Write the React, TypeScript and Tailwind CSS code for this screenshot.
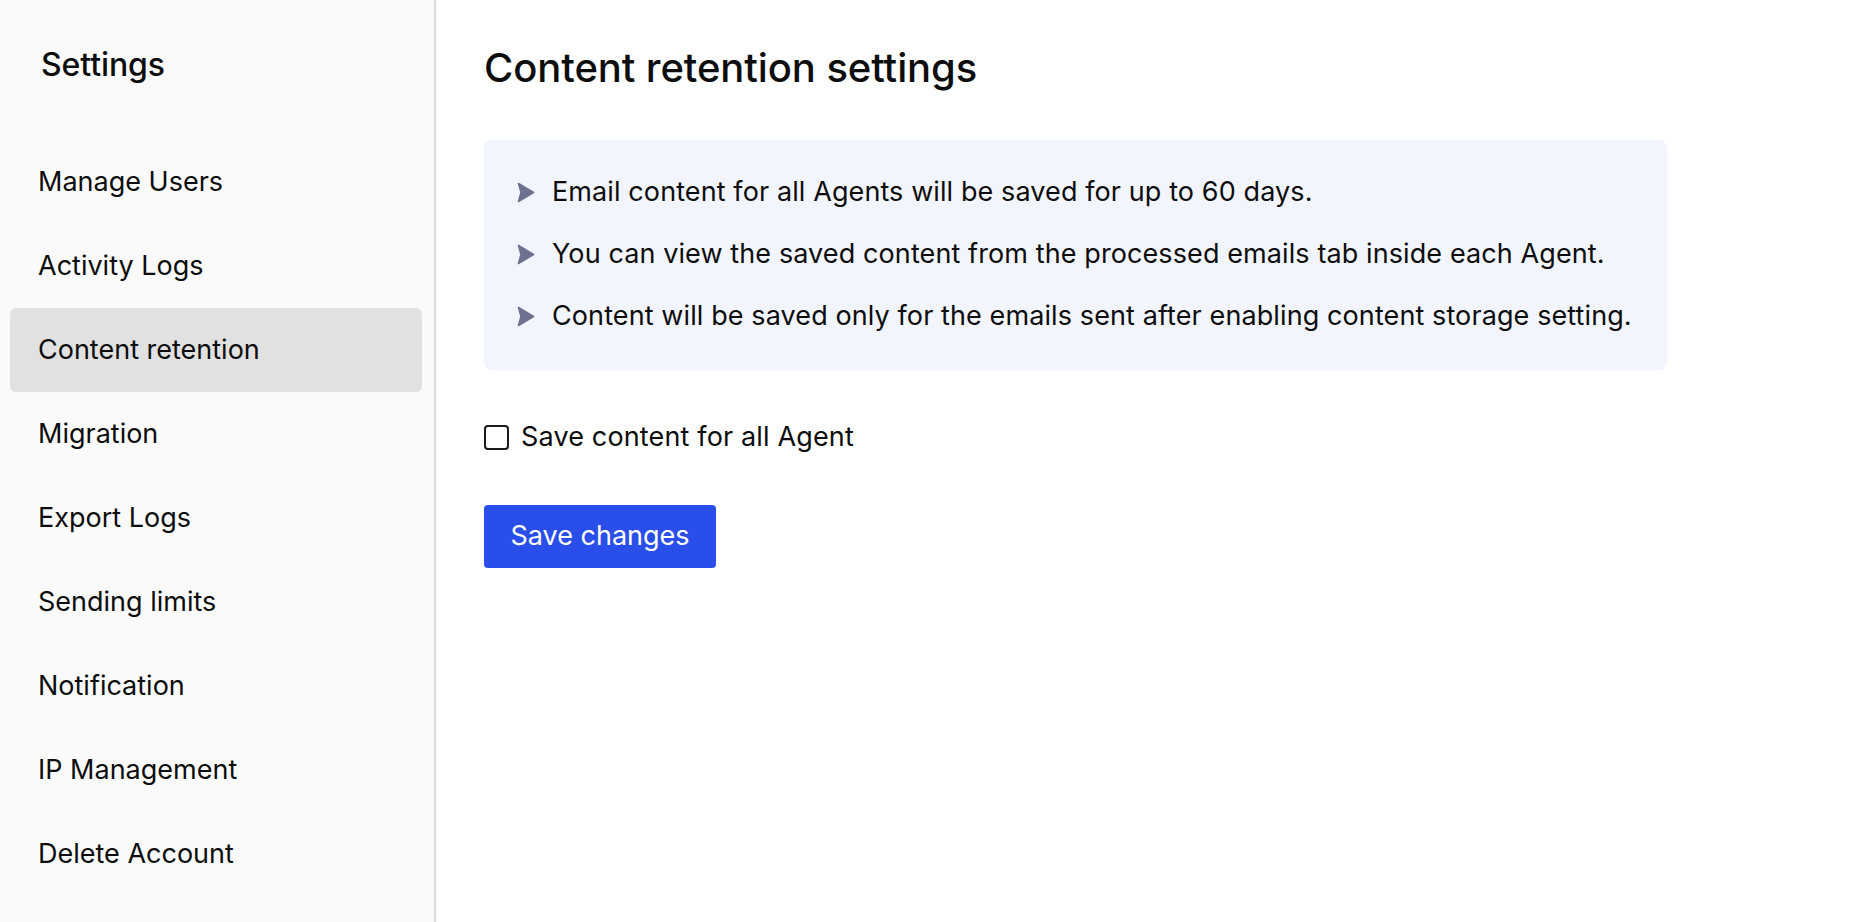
import React, { useState } from "react";

const navItems = [
  "Manage Users",
  "Activity Logs",
  "Content retention",
  "Migration",
  "Export Logs",
  "Sending limits",
  "Notification",
  "IP Management",
  "Delete Account",
];

const notes = [
  "Email content for all Agents will be saved for up to 60 days.",
  "You can view the saved content from the processed emails tab inside each Agent.",
  "Content will be saved only for the emails sent after enabling content storage setting.",
];

function Bullet() {
  return (
    <svg width="18" height="21" viewBox="0 0 18 21" className="shrink-0">
      <path
        d="M1.5 1.5 L16.5 10.5 L1.5 19.5 L4 10.5 Z"
        fill="#6d7290"
        stroke="#6d7290"
        strokeWidth="1.6"
        strokeLinejoin="round"
      />
    </svg>
  );
}

export default function App() {
  const [active, setActive] = useState("Content retention");
  const [saveAll, setSaveAll] = useState(false);

  return (
    <div
      className="flex h-screen w-full bg-white text-[#0d0d0d] antialiased"
      style={{ fontFamily: "Inter, 'Noto Sans', sans-serif" }}
    >
      <aside className="flex w-[436px] shrink-0 flex-col border-r-2 border-[#dcdcdc] bg-[#fafafa]">
        <h2 className="pl-[41px] pt-[47px] text-[32px] leading-[36px] font-medium tracking-[-0.1px]">
          Settings
        </h2>
        <nav className="mt-[57px] flex flex-col pl-[10px] pr-[12px]">
          {navItems.map((item) => (
            <button
              key={item}
              onClick={() => setActive(item)}
              className={`h-[84px] rounded-md pl-[28px] text-left text-[27px] leading-[84px] ${
                active === item ? "bg-[#e1e1e1]" : ""
              }`}
            >
              {item}
            </button>
          ))}
        </nav>
      </aside>

      <main className="flex flex-1 flex-col pl-[48px]">
        <h1 className="pt-[44px] text-[40px] leading-[48px] font-medium tracking-[-0.1px]">
          Content retention settings
        </h1>

        <div className="mt-[48px] w-[1183px] rounded-lg bg-[#f2f5fe] pb-[23px] pl-[33px] pt-[21px]">
          {notes.map((n) => (
            <div
              key={n}
              className="flex h-[62px] items-center gap-[17px] text-[27px] leading-[62px] tracking-[0.1px]"
            >
              <Bullet />
              <span>{n}</span>
            </div>
          ))}
        </div>

        <label className="mt-[51px] flex h-[32px] cursor-pointer items-center gap-[12px] text-[27px] leading-[32px] tracking-[0.15px]">
          <input
            type="checkbox"
            checked={saveAll}
            onChange={(e) => setSaveAll(e.target.checked)}
            className="peer sr-only"
          />
          <span className="flex h-[25px] w-[25px] items-center justify-center rounded-[4px] border-2 border-[#1a1a1a] bg-white">
            {saveAll && (
              <svg width="15" height="15" viewBox="0 0 15 15">
                <path d="M2 8 L6 12 L13 3" fill="none" stroke="#1a1a1a" strokeWidth="2.2" />
              </svg>
            )}
          </span>
          <span>Save content for all Agent</span>
        </label>

        <div className="mt-[52px]">
          <button className="flex h-[63px] w-[232px] items-center justify-center rounded-[4px] bg-[#2a4ee9] text-[27px] text-white">
            Save changes
          </button>
        </div>
      </main>
    </div>
  );
}
